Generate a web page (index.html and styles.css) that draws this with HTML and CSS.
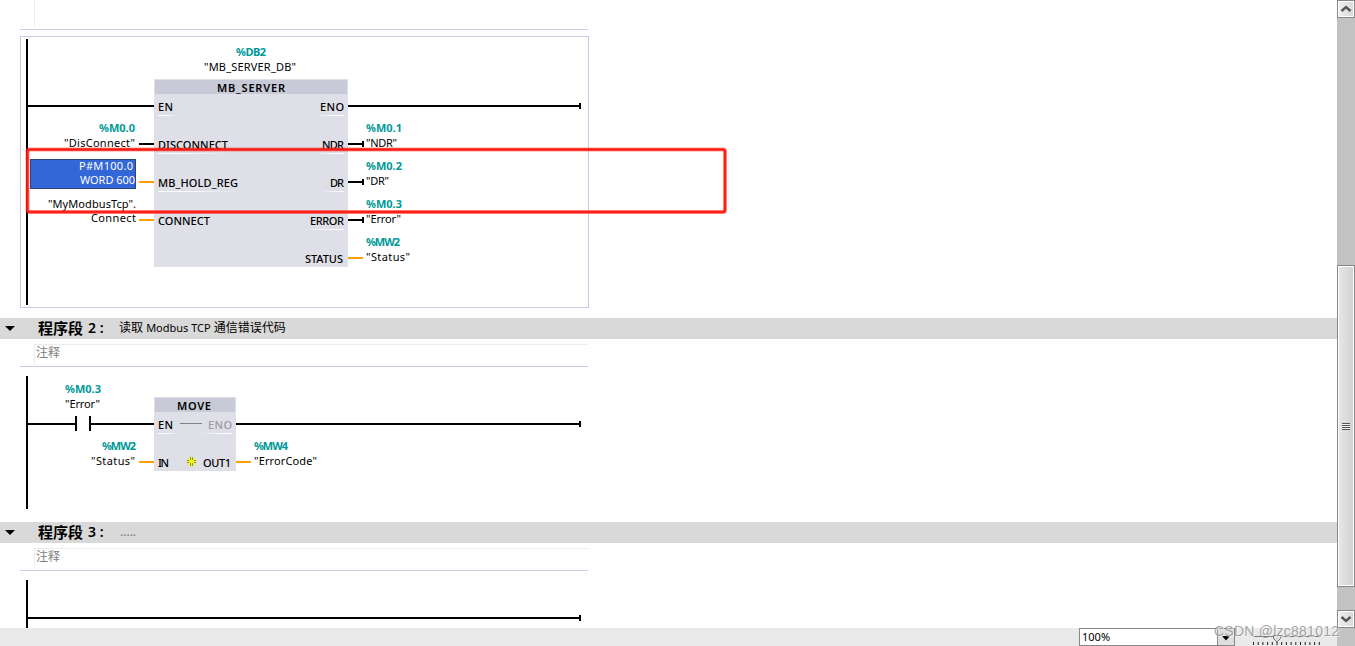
FILE: index.html
```html
<!DOCTYPE html>
<html lang="zh-CN">
<head>
    <meta charset="UTF-8">
    <meta name="viewport" content="width=device-width, initial-scale=1.0">
    <title>MB_SERVER</title>
    <link rel="stylesheet" href="styles.css">
</head>
<body>
    <div class="app">
        <div class="workspace">
            <div class="editor">
                <!-- 程序段 1 -->
                <section class="network">
                    <div class="comment comment-first"></div>
                    <svg class="ladder ladder-first" viewBox="0 36 600 272" width="600" height="272">
                        <defs>
                            <linearGradient id="fadeRight">
                                <stop offset="0.3" stop-color="#fff"/>
                                <stop offset="1" stop-color="#fff" stop-opacity="0"/>
                            </linearGradient>
                            <linearGradient id="fadeLeft">
                                <stop offset="0" stop-color="#fff" stop-opacity="0"/>
                                <stop offset="0.7" stop-color="#fff"/>
                            </linearGradient>
                        </defs>
                        <rect class="frame" x="20.5" y="36.5" width="568" height="271"/>
                        <rect class="block" x="154" y="79" width="194" height="188"/>
                        <rect class="block-head" x="155" y="80" width="192" height="14"/>

                        <path class="wire" d="M27 39V305M27 106H154M348 106H580M580 103V109"/>
                        <path class="wire" d="M139 144H154M348 144H363M363 141V147M348 182H363M363 179V185M348 220H363M363 217V223"/>
                        <path class="wire data" d="M139 182H154M139 220H154M348 258H363"/>

                        <g fill="url(#fadeRight)">
                            <rect x="158" y="115" width="22" height="1"/>
                            <rect x="158" y="153" width="72" height="1"/>
                            <rect x="158" y="191" width="80" height="1"/>
                        </g>
                        <g fill="url(#fadeLeft)">
                            <rect x="314" y="115" width="30" height="1"/>
                            <rect x="314" y="153" width="30" height="1"/>
                            <rect x="322" y="191" width="22" height="1"/>
                            <rect x="304" y="229" width="40" height="1"/>
                        </g>

                        <text class="addr" x="236" y="56" textLength="30">%DB2</text>
                        <text x="204" y="71" textLength="92">"MB_SERVER_DB"</text>
                        <text class="name" x="217" y="92" textLength="68">MB_SERVER</text>
                        <text class="pin" x="158" y="111" textLength="15">EN</text>
                        <text class="pin" x="158" y="149" textLength="70">DISCONNECT</text>
                        <text class="pin" x="158" y="187" textLength="80">MB_HOLD_REG</text>
                        <text class="pin" x="158" y="225" textLength="52">CONNECT</text>
                        <text class="pin" x="320" y="111" textLength="24">ENO</text>
                        <text class="pin" x="322" y="149" textLength="22">NDR</text>
                        <text class="pin" x="330" y="187" textLength="14">DR</text>
                        <text class="pin" x="310" y="225" textLength="34">ERROR</text>
                        <text class="pin" x="305" y="263" textLength="38">STATUS</text>

                        <text class="addr" x="99" y="132" textLength="36">%M0.0</text>
                        <text x="64" y="147" textLength="71">"DisConnect"</text>
                        <rect class="selected" x="30" y="159" width="106" height="30"/>
                        <rect class="selected-edge" x="30.5" y="159.5" width="105" height="29"/>
                        <text class="on-selected" x="79" y="170" textLength="54">P#M100.0</text>
                        <text class="on-selected" x="80" y="184" textLength="55">WORD 600</text>
                        <text x="48" y="208" textLength="88">"MyModbusTcp".</text>
                        <text x="91" y="222" textLength="45">Connect</text>

                        <text class="addr" x="366" y="132" textLength="36">%M0.1</text>
                        <text x="366" y="147" textLength="31">"NDR"</text>
                        <text class="addr" x="366" y="170" textLength="36">%M0.2</text>
                        <text x="366" y="185" textLength="23">"DR"</text>
                        <text class="addr" x="366" y="208" textLength="36">%M0.3</text>
                        <text x="366" y="223" textLength="35">"Error"</text>
                        <text class="addr" x="366" y="246" textLength="34">%MW2</text>
                        <text x="366" y="261" textLength="44">"Status"</text>
                    </svg>
                </section>

                <!-- 程序段 2 -->
                <section class="network">
                    <header class="network-head">
                        <span class="toggle"></span>
                        <span class="network-label">程序段</span>
                        <span class="network-no">2 :</span>
                        <span class="network-title">读取 <i>Modbus TCP</i> 通信错误代码</span>
                    </header>
                    <div class="comment">注释</div>
                    <svg class="ladder" viewBox="0 376 600 146" width="600" height="146">
                        <rect class="block" x="154" y="397" width="82" height="74"/>
                        <rect class="block-head" x="155" y="398" width="80" height="14"/>

                        <path class="wire" d="M27 376V509M27 424H76M76 416V431M90 416V431M90 424H154M236 424H580M580 421V427"/>
                        <path class="wire data" d="M139 462H154M236 462H251"/>
                        <path class="bypass" d="M180 423.5H202"/>
                        <rect x="158" y="433" width="22" height="1" fill="url(#fadeRight)"/>
                        <rect x="200" y="433" width="32" height="1" fill="url(#fadeLeft)"/>

                        <text class="addr" x="65" y="393" textLength="36">%M0.3</text>
                        <text x="65" y="408" textLength="35">"Error"</text>
                        <text class="name" x="177" y="410" textLength="34">MOVE</text>
                        <text class="pin" x="158" y="429" textLength="15">EN</text>
                        <text class="pin off" x="208" y="429" textLength="24">ENO</text>
                        <text class="pin" x="158" y="467" textLength="11">IN</text>
                        <text class="pin" x="203" y="467" textLength="28">OUT1</text>
                        <path class="star" d="M191.5 457V467M187 461.5H196M188 458L195 465M195 458L188 465"/>
                        <path class="star-edge" d="M190.5 457V460M192.5 457V460M190.5 463V466M192.5 463V466M187 460.5H189M194 460.5H196M187 462.5H189M194 462.5H196"/>
                        <text class="addr" x="102" y="450" textLength="34">%MW2</text>
                        <text x="91" y="465" textLength="44">"Status"</text>
                        <text class="addr" x="254" y="450" textLength="34">%MW4</text>
                        <text x="254" y="465" textLength="63">"ErrorCode"</text>
                    </svg>
                </section>

                <!-- 程序段 3 -->
                <section class="network">
                    <header class="network-head">
                        <span class="toggle"></span>
                        <span class="network-label">程序段</span>
                        <span class="network-no">3 :</span>
                        <span class="network-title empty">.....</span>
                    </header>
                    <div class="comment">注释</div>
                    <svg class="ladder" viewBox="0 580 600 48" width="600" height="48">
                        <path class="wire" d="M27 580V628M27 618H580M580 615V621"/>
                    </svg>
                </section>

                <svg class="highlight" viewBox="0 0 704 68" width="704" height="68">
                    <rect class="halo" x="2.5" y="2.5" width="697.5" height="62.5" rx="2"/>
                    <rect class="line" x="2.5" y="2.5" width="697.5" height="62.5" rx="2"/>
                </svg>
            </div>

            <footer class="statusbar">
                <div class="zoom-select">
                    <span class="zoom-value">100%</span>
                    <span class="zoom-drop">
                        <svg viewBox="0 0 8 5" width="8" height="5"><path d="M0 0H8L4 4.5Z"/></svg>
                    </span>
                </div>
                <svg class="zoom-slider" viewBox="0 0 68 18" width="68" height="18">
                    <path d="M0 8.5H68" stroke="#777"/>
                    <path d="M0 15.5H68" stroke="#222" stroke-width="3" stroke-dasharray="1 3.7"/>
                    <path d="M20.5 7.5H27.5V10.5L24 14L20.5 10.5Z" fill="#ddd" stroke="#777"/>
                </svg>
            </footer>
        </div>

        <div class="scrollbar">
            <div class="scroll-btn">
                <svg viewBox="0 0 12 12" width="12" height="12"><path d="M1.5 8L6 4L10.5 8"/></svg>
            </div>
            <div class="scroll-thumb"><span class="grip"></span></div>
            <div class="scroll-btn">
                <svg viewBox="0 0 12 12" width="12" height="12"><path d="M1.5 4L6 8L10.5 4"/></svg>
            </div>
        </div>

        <svg class="watermark" viewBox="0 0 130 20" width="130" height="20">
            <text class="shade" x="2" y="15" textLength="125">CSDN @lzc881012</text>
            <text x="1" y="14" textLength="125">CSDN @lzc881012</text>
        </svg>
    </div>
</body>
</html>
```
FILE: styles.css
```css
* {
    margin: 0;
    padding: 0;
    box-sizing: border-box;
}

body {
    font-family: "Noto Sans", "Noto Sans CJK SC", sans-serif;
    font-size: 11px;
    color: #000;
    background: #fff;
    overflow: hidden;
}

svg {
    display: block;
}

.app {
    position: relative;
    display: flex;
    width: 1355px;
    height: 646px;
}

.workspace {
    flex: 1;
    display: flex;
    flex-direction: column;
    min-width: 0;
}

.editor {
    position: relative;
    flex: 1;
    min-height: 0;
    overflow: hidden;
}

/* network header + comment */
.network-head {
    display: flex;
    align-items: center;
    height: 21px;
    padding-left: 5px;
    background: #d9d9d9;
}

.toggle {
    width: 10px;
    border: 5px solid transparent;
    border-top-color: #000;
    border-bottom: 0;
}

.network-label {
    width: 50px;
    margin-left: 23px;
    padding-bottom: 2px;
    font-family: "Noto Sans CJK SC", sans-serif;
    font-size: 15px;
    font-weight: 700;
    line-height: 19px;
    white-space: nowrap;
}

.network-no {
    width: 31px;
    padding-bottom: 1px;
    font-size: 14px;
    font-weight: 600;
    line-height: 20px;
    white-space: nowrap;
}

.network-title {
    padding-bottom: 1px;
    font-size: 12px;
    line-height: 20px;
    white-space: nowrap;
}

.network-title i {
    font-size: 11px;
    font-style: normal;
}

.network-title.empty {
    margin-left: 1px;
    color: #777;
}

.comment {
    position: relative;
    height: 28px;
    width: 568px;
    margin-left: 20px;
    padding: 5px 0 2px 14px;
    border-bottom: 1px solid #cdcbe6;
    color: #808080;
    font-size: 12px;
    line-height: 18px;
    text-indent: 2px;
}

.comment::before {
    content: "";
    position: absolute;
    left: 14px;
    top: 5px;
    right: 0;
    height: 20px;
    border-left: 1px solid #ececec;
    border-top: 1px solid #ececec;
}

.comment-first {
    height: 30px;
}

.comment-first::before {
    top: 0;
    height: 26px;
    border-top: 0;
}

/* ladder diagrams */
.ladder {
    margin-top: 9px;
    font-size: 11px;
}

.ladder-first {
    margin-top: 6px;
    margin-bottom: 10px;
}

.frame {
    fill: none;
    stroke: #cdcbe6;
}

.block {
    fill: #dfdfe8;
}

.block-head {
    fill: #c9cad8;
}

.wire {
    fill: none;
    stroke: #000;
    stroke-width: 2;
}

.wire.data {
    stroke: #ffa000;
}

.bypass {
    stroke: #808080;
}

.addr {
    fill: #009999;
    font-weight: 700;
}

.name {
    font-weight: 600;
}

.pin {
    font-weight: 500;
}

.pin.off {
    fill: #9c9ca2;
}

.selected {
    fill: #3366d6;
}

.selected-edge {
    fill: none;
    stroke: #222;
    stroke-dasharray: 1 1;
}

.on-selected {
    fill: #fff;
}

.star {
    stroke: #f6f600;
    stroke-width: 1.4;
}

.star-edge {
    stroke: #5c7030;
    stroke-opacity: 0.7;
}

.highlight {
    position: absolute;
    left: 25px;
    top: 147px;
    fill: none;
}

.halo {
    stroke: #ff1f14;
    stroke-opacity: 0.45;
    stroke-width: 4;
}

.line {
    stroke: #ff1f14;
    stroke-width: 2.4;
}

/* bottom bar */
.statusbar {
    display: flex;
    justify-content: flex-end;
    height: 18px;
    padding-right: 16px;
    background: #e9e9e9;
}

.zoom-select {
    display: flex;
    width: 156px;
    margin-right: 18px;
    border: 1px solid #888;
    background: #fff;
}

.zoom-value {
    flex: 1;
    padding-left: 2px;
    line-height: 16px;
}

.zoom-drop {
    display: flex;
    align-items: center;
    justify-content: center;
    width: 17px;
    padding-top: 2px;
    border-left: 1px solid #888;
    background: #dedede;
}

/* scrollbar */
.scrollbar {
    display: flex;
    flex-direction: column;
    width: 18px;
    padding-bottom: 18px;
    background: #c2c2c2;
}

.scroll-btn {
    display: flex;
    align-items: center;
    justify-content: center;
    height: 18px;
    border: 1px solid #888;
    background: linear-gradient(90deg, #f0f0f0, #d8d8d8);
    box-shadow: inset 0 0 0 1px #fff;
}

.scroll-btn path {
    fill: none;
    stroke: #555;
    stroke-width: 2.4;
}

.scroll-thumb {
    display: flex;
    align-items: center;
    justify-content: center;
    height: 322px;
    margin: 247px 0 23px;
    border: 1px solid #888;
    background: linear-gradient(90deg, #e8e8e8, #d0d0d0);
    box-shadow: inset 0 0 0 1px #fff;
}

.grip {
    width: 8px;
    height: 7px;
    background: repeating-linear-gradient(#555 0 1px, #eee 1px 2px);
}

.watermark {
    position: absolute;
    left: 1213px;
    top: 622px;
    font-family: "Liberation Sans", Arial, sans-serif;
    font-size: 14px;
    fill: #8f8f8f;
    fill-opacity: 0.8;
}

.watermark .shade {
    fill: #fff;
    fill-opacity: 0.6;
}
```
